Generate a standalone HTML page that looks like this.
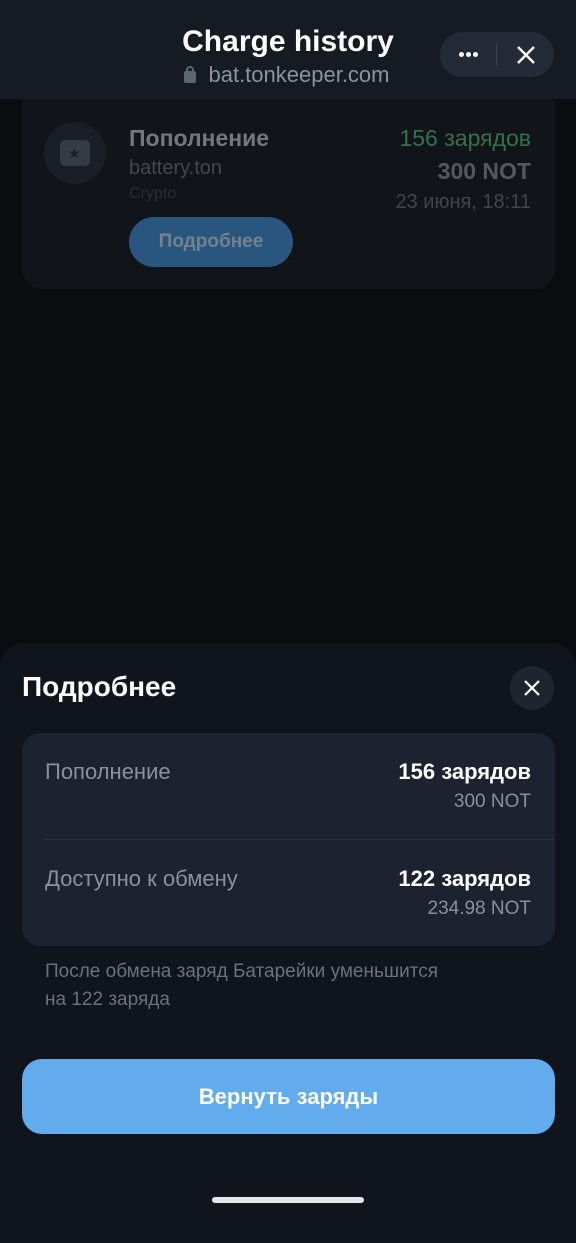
<!DOCTYPE html>
<html><head><meta charset="utf-8"><style>
*{margin:0;padding:0;box-sizing:border-box}
body{width:576px;height:1217px;background:#0a0c10;font-family:"Liberation Sans","DejaVu Sans",sans-serif;position:relative;overflow:hidden}
.abs{position:absolute}
.hdr{left:0;top:0;width:576px;height:99px;background:#161a22}
.t{white-space:nowrap}
</style></head><body>
<div class="abs hdr"></div>
<div class="abs t" style="left:0;width:576px;top:25px;text-align:center;color:#fff;font-size:30px;font-weight:bold">Charge history</div>
<div class="abs t" style="left:0;width:576px;top:62px;text-align:center;color:#8b93a1;font-size:22px;padding-left:22px">bat.tonkeeper.com</div>
<div class="abs" style="left:184px;top:71px;width:12px;height:12px;background:#5e6572;border-radius:2px"></div>
<div class="abs" style="left:186px;top:66px;width:8px;height:8px;border:2px solid #5e6572;border-radius:4px 4px 0 0"></div>
<div class="abs" style="left:440px;top:32px;width:114px;height:45px;background:#252b36;border-radius:23px"></div>
<div class="abs" style="left:459px;top:52px;width:5px;height:5px;background:#fff;border-radius:50%"></div>
<div class="abs" style="left:466px;top:52px;width:5px;height:5px;background:#fff;border-radius:50%"></div>
<div class="abs" style="left:473px;top:52px;width:5px;height:5px;background:#fff;border-radius:50%"></div>
<div class="abs" style="left:496px;top:44px;width:1px;height:22px;background:#3a414d"></div>
<svg class="abs" style="left:515px;top:44px" width="22" height="22"><path d="M3 3L19 19M19 3L3 19" stroke="#fff" stroke-width="2.4"/></svg>

<div class="abs" style="left:22px;top:99px;width:533px;height:190px;background:#111419;border-radius:0 0 20px 20px"></div>
<div class="abs" style="left:44px;top:122px;width:62px;height:62px;background:#1a1e26;border-radius:50%"></div>
<div class="abs" style="left:60px;top:140px;width:30px;height:26px;background:#363a42;border-radius:5px"></div>
<div class="abs t" style="left:68px;top:145px;color:#1a1e26;font-size:14px">★</div>
<div class="abs t" style="left:129px;top:125px;color:#74777d;font-size:23px;font-weight:bold">Пополнение</div>
<div class="abs t" style="left:129px;top:157px;color:#44474e;font-size:20px">battery.ton</div>
<div class="abs t" style="left:129px;top:185px;color:#2b2e35;font-size:16px">Crypto</div>
<div class="abs t" style="right:45px;top:125px;color:#36704c;font-size:23px">156 зарядов</div>
<div class="abs t" style="right:45px;top:158px;color:#55585f;font-size:23px;font-weight:bold">300 NOT</div>
<div class="abs t" style="right:45px;top:191px;color:#42454c;font-size:20px">23 июня, 18:11</div>
<div class="abs t" style="left:129px;top:217px;width:164px;height:50px;background:#28567f;border-radius:25px;color:#75818c;font-size:19px;font-weight:bold;text-align:center;line-height:50px">Подробнее</div>

<div class="abs" style="left:0;top:643px;width:576px;height:600px;background:#10141c;border-radius:24px 24px 0 0"></div>
<div class="abs t" style="left:22px;top:671px;color:#fff;font-size:28px;font-weight:bold">Подробнее</div>
<div class="abs" style="left:510px;top:666px;width:44px;height:44px;background:#1f242e;border-radius:50%"></div>
<svg class="abs" style="left:522px;top:678px" width="20" height="20"><path d="M3 3L17 17M17 3L3 17" stroke="#fff" stroke-width="2.2"/></svg>

<div class="abs" style="left:22px;top:733px;width:533px;height:213px;background:#1d2230;border-radius:18px"></div>
<div class="abs" style="left:44px;top:839px;width:511px;height:1px;background:#2b3140"></div>
<div class="abs t" style="left:45px;top:759px;color:#8a909c;font-size:22px">Пополнение</div>
<div class="abs t" style="right:45px;top:759px;color:#fff;font-size:22px;font-weight:bold">156 зарядов</div>
<div class="abs t" style="right:45px;top:791px;color:#8a909c;font-size:19px">300 NOT</div>
<div class="abs t" style="left:45px;top:866px;color:#8a909c;font-size:22px">Доступно к обмену</div>
<div class="abs t" style="right:45px;top:866px;color:#fff;font-size:22px;font-weight:bold">122 зарядов</div>
<div class="abs t" style="right:45px;top:898px;color:#8a909c;font-size:19px">234.98 NOT</div>
<div class="abs" style="left:45px;top:958px;width:470px;color:#6b717d;font-size:19px;line-height:28px">После обмена заряд Батарейки уменьшится<br>на 122 заряда</div>

<div class="abs t" style="left:22px;top:1059px;width:533px;height:75px;background:#62acee;border-radius:20px;color:#fff;font-size:22px;font-weight:bold;text-align:center;line-height:75px">Вернуть заряды</div>
<div class="abs" style="left:212px;top:1197px;width:152px;height:6px;background:#e8e8ea;border-radius:3px"></div>
</body></html>
